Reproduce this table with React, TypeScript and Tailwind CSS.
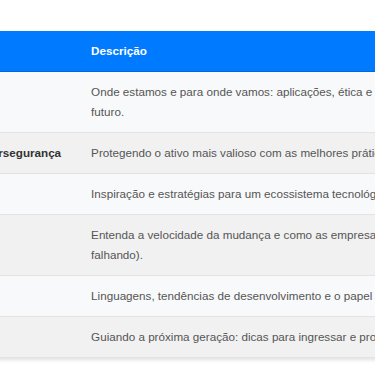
import React from "react";

type Row = { topic: string; text: string };

const rows: Row[] = [
  { topic: "", text: "Onde estamos e para onde vamos: aplicações, ética e os grandes desafios do futuro." },
  { topic: "Cibersegurança", text: "Protegendo o ativo mais valioso com as melhores práticas." },
  { topic: "", text: "Inspiração e estratégias para um ecossistema tecnológico sustentável." },
  { topic: "", text: "Entenda a velocidade da mudança e como as empresas estão reagindo (ou falhando)." },
  { topic: "", text: "Linguagens, tendências de desenvolvimento e o papel da IA no código." },
  { topic: "", text: "Guiando a próxima geração: dicas para ingressar e progredir na área." },
];

export default function App() {
  return (
    <div
      className="w-[375px] h-[366px] overflow-hidden bg-white pt-[31px]"
      style={{ fontFamily: '"Liberation Sans", Arial, sans-serif' }}
    >
      <table className="-ml-[42px] border-collapse text-left text-[11.67px] leading-[20px] shadow-[0_2px_4px_rgba(0,0,0,0.12)]">
        <thead>
          <tr className="bg-[#007bff] text-white">
            <th className="px-[15px] py-[10px] font-bold whitespace-nowrap border-b border-[#0069d9]"></th>
            <th className="px-[15px] py-[10px] font-bold border-b border-[#0069d9]">
              <div className="w-[422px]">Descrição</div>
            </th>
          </tr>
        </thead>
        <tbody>
          {rows.map((r, i) => (
            <tr
              key={i}
              className={
                i % 2 === 0
                  ? "bg-[#f8f9fa] border-b border-[#e3e3e3]"
                  : "bg-[#f1f1f1] border-b border-[#e3e3e3]"
              }
            >
              <td className="px-[15px] py-[10px] align-middle font-bold text-[#333333] whitespace-nowrap">
                {r.topic}
              </td>
              <td className="px-[15px] py-[10px] align-middle text-[#555555]">
                <div className="w-[422px]">{r.text}</div>
              </td>
            </tr>
          ))}
        </tbody>
      </table>
    </div>
  );
}
